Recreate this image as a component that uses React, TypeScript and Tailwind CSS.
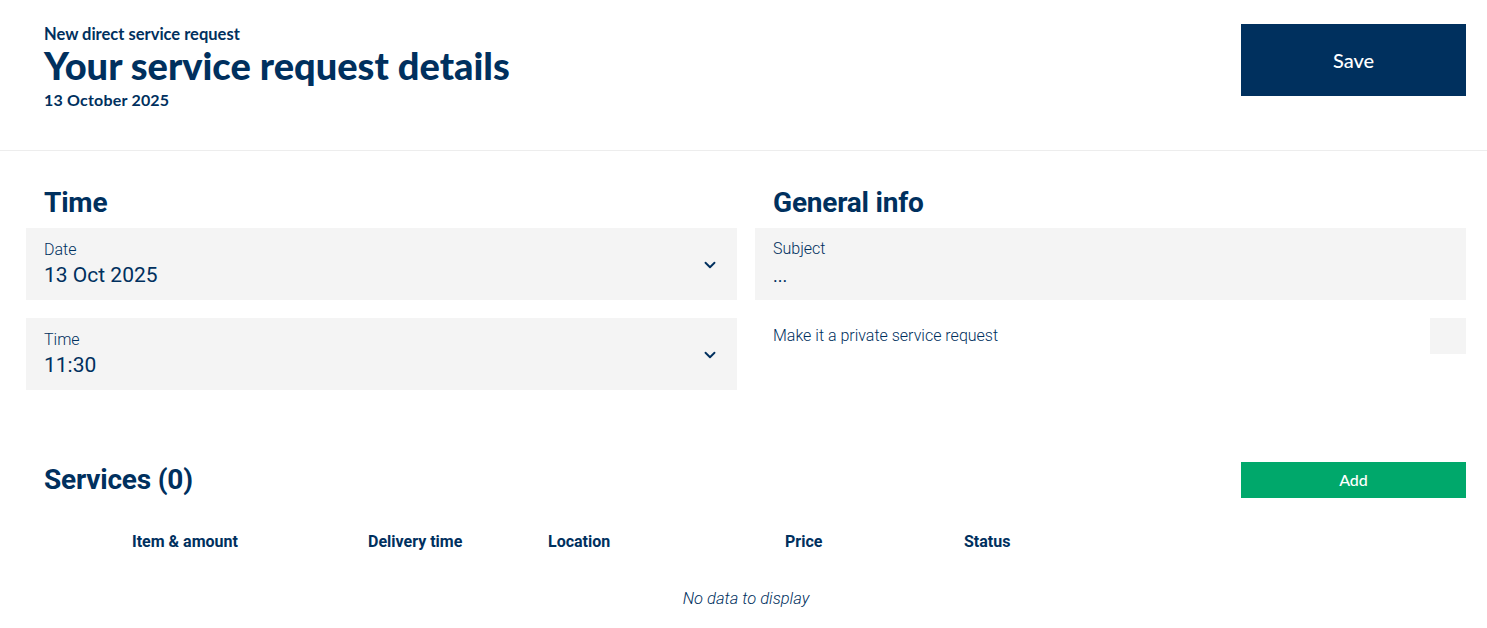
import { ChevronDown } from 'lucide-react';

const NAVY = 'text-[#00305e]';

const COLUMNS = [
  { label: 'Item & amount', w: 'w-[236px]' },
  { label: 'Delivery time', w: 'w-[180px]' },
  { label: 'Location', w: 'w-[237px]' },
  { label: 'Price', w: 'w-[179px]' },
  { label: 'Status', w: 'w-[120px]' },
];

function SelectField({ label, value }: { label: string; value: string }) {
  return (
    <div className="flex items-center justify-between h-[72px] bg-[#f4f4f4] pl-[18px] pr-[18px]">
      <div className="flex flex-col">
        <span className="text-[16px] leading-[20px] font-light">{label}</span>
        <span className="text-[21px] leading-[26px] mt-[2px]">{value}</span>
      </div>
      <ChevronDown size={18} strokeWidth={2.5} className="mt-[2px]" />
    </div>
  );
}

export default function App() {
  return (
    <div
      className={`min-h-screen bg-white ${NAVY}`}
      style={{ fontFamily: 'Roboto, "Noto Sans", sans-serif' }}
    >
      {/* Page header */}
      <header className="flex items-start justify-between pl-[44px] pr-[21px] pt-[24px] h-[151px] border-b border-[#ededed]">
        <div className="flex flex-col pt-[1px]" style={{ fontFamily: 'Lato, "Noto Sans", sans-serif' }}>
          <span className="text-[16.5px] leading-[18px] font-bold">New direct service request</span>
          <h1 className="text-[38px] leading-[44px] font-black">Your service request details</h1>
          <span className="text-[16px] leading-[20px] font-bold mt-[3px] tracking-[0.2px]">13 October 2025</span>
        </div>
        <button
          className="w-[225px] h-[72px] bg-[#00305e] text-white text-[20px] font-medium"
          style={{ fontFamily: 'Lato, "Noto Sans", sans-serif' }}
        >
          Save
        </button>
      </header>

      {/* Time / General info */}
      <section className="grid grid-cols-2 gap-x-[18px] pl-[26px] pr-[21px] pt-[36px]">
        <div className="flex flex-col">
          <h2 className="text-[28px] leading-[32px] font-bold pl-[18px] mb-[9px] tracking-[-0.2px]">Time</h2>
          <div className="flex flex-col gap-[18px]">
            <SelectField label="Date" value="13 Oct 2025" />
            <SelectField label="Time" value="11:30" />
          </div>
        </div>
        <div className="flex flex-col">
          <h2 className="text-[28px] leading-[32px] font-bold pl-[18px] mb-[9px] tracking-[-0.2px]">General info</h2>
          <div className="flex flex-col h-[72px] bg-[#f4f4f4] pl-[18px] pt-[11px]">
            <span className="text-[16px] leading-[20px] font-light">Subject</span>
            <span className="text-[18px] leading-[22px] mt-[6px]">...</span>
          </div>
          <div className="flex items-start justify-between mt-[18px]">
            <span className="text-[16px] leading-[20px] font-light pl-[18px] pt-[8px]">
              Make it a private service request
            </span>
            <div className="w-[36px] h-[36px] bg-[#f4f4f4]" />
          </div>
        </div>
      </section>

      {/* Services */}
      <section className="pl-[26px] pr-[21px] pt-[72px]">
        <div className="flex items-center justify-between">
          <h2 className="text-[28px] leading-[32px] font-bold pl-[18px] tracking-[-0.2px]">Services (0)</h2>
          <button
            className="w-[225px] h-[36px] bg-[#00a86b] text-white text-[16px] font-medium"
            style={{ fontFamily: 'Lato, "Noto Sans", sans-serif' }}
          >
            Add
          </button>
        </div>
        <div className="flex pl-[106px] mt-[34px]">
          {COLUMNS.map((c) => (
            <div key={c.label} className={`${c.w} text-[16px] leading-[20px] font-bold`}>
              {c.label}
            </div>
          ))}
        </div>
        <p className="text-center italic font-light text-[16.5px] leading-[20px] mt-[37px]">
          No data to display
        </p>
      </section>
    </div>
  );
}
